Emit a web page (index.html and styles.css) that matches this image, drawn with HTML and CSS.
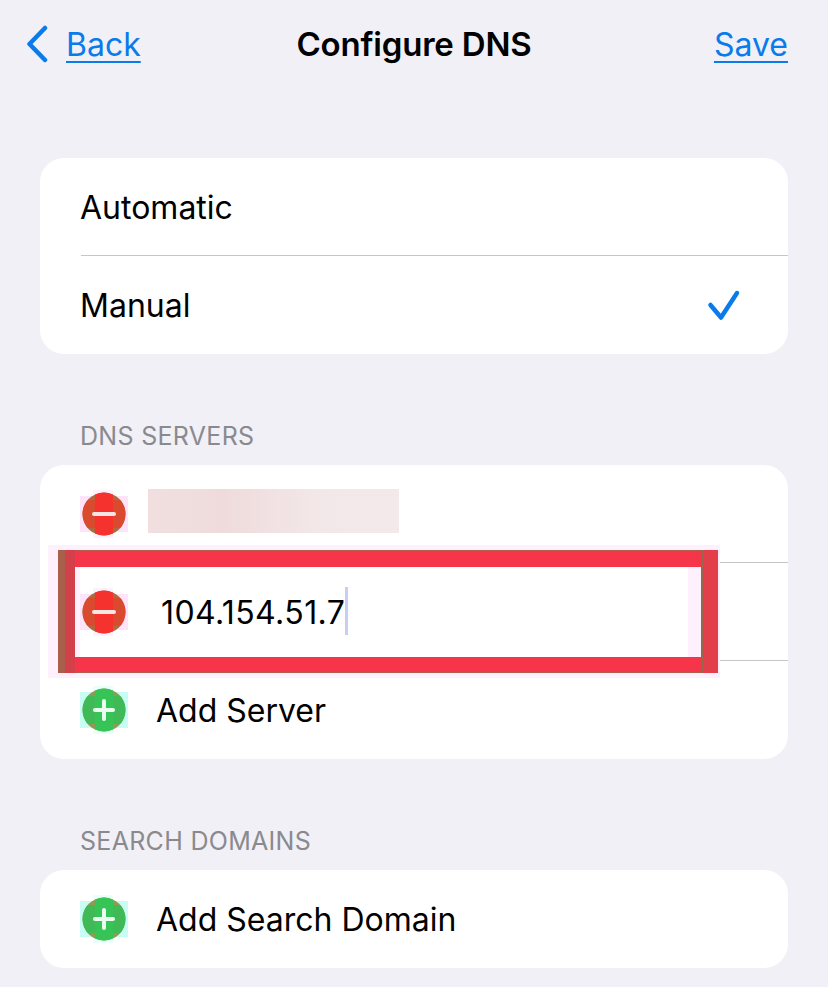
FILE: index.html
```html
<!DOCTYPE html>
<html>
    <head>
        <title>Configure DNS</title>
        <link rel="stylesheet" href="styles.css">
    </head>
    <body>
      <svg class="icon-defs" width="0" height="0">
        <defs>
          <clipPath id="round-clip"><circle cx="24" cy="24" r="21.500"/></clipPath>
          <symbol id="minus-icon" viewBox="0 0 48 48">
            <rect x="0" y="6" width="48" height="36" fill="#fee4fa"/>
            <rect x="13" y="0" width="20" height="48" fill="#fff0fd"/>
            <g clip-path="url(#round-clip)">
              <rect width="48" height="48" fill="#ad6a3e"/>
              <rect x="0" y="10" width="48" height="28" fill="#d94a2f"/>
              <rect x="15" y="0" width="18" height="48" fill="#f6322e"/>
            </g>
            <rect x="12" y="22" width="24" height="4" rx="2" fill="#f7e6e2"/>
          </symbol>
          <symbol id="plus-icon" viewBox="0 0 48 48">
            <rect x="0" y="6" width="48" height="36" fill="#c8fdf3"/>
            <rect x="13" y="0" width="20" height="48" fill="#e8fffa"/>
            <g clip-path="url(#round-clip)">
              <rect width="48" height="48" fill="#8f9a52"/>
              <rect x="0" y="10" width="48" height="28" fill="#3fba57"/>
              <rect x="15" y="0" width="18" height="48" fill="#36c457"/>
            </g>
            <rect x="22" y="13" width="4" height="22" rx="2" fill="#ecfbef"/>
            <rect x="13" y="22" width="22" height="4" rx="2" fill="#ecfbef"/>
          </symbol>
        </defs>
      </svg>

      <div class="nav-bar">
        <a class="nav-back" href="#">
          <svg class="back-chevron" width="24" height="38" viewBox="0 0 24 38">
            <path d="M20 3 L4.500 19 L20 35" fill="none" stroke="#0a7bea" stroke-width="4.500" stroke-linecap="round" stroke-linejoin="round"/>
          </svg>
          <span class="nav-link">Back</span>
        </a>
        <h1 class="nav-title">Configure DNS</h1>
        <a class="nav-link nav-save" href="#">Save</a>
      </div>

      <div class="card first-card">
        <div class="row">Automatic</div>
        <div class="row row-line">
          <span>Manual</span>
          <svg class="check" width="34" height="34" viewBox="0 0 34 34">
            <path d="M3.500 17 L14 29.500 L30 5" fill="none" stroke="#0a7bea" stroke-width="4.500" stroke-linecap="round" stroke-linejoin="round"/>
          </svg>
        </div>
      </div>

      <h2 class="section-title">DNS SERVERS</h2>
      <div class="card">
        <div class="row icon-row">
          <svg class="round-icon" width="48" height="48"><use href="#minus-icon"/></svg>
          <div class="blurred-ip"></div>
        </div>
        <div class="row icon-row row-line">
          <svg class="round-icon" width="48" height="48"><use href="#minus-icon"/></svg>
          <span class="ip-text">104.154.51.7</span><span class="caret"></span>
          <div class="highlight-box"></div>
        </div>
        <div class="row icon-row row-line">
          <svg class="round-icon" width="48" height="48"><use href="#plus-icon"/></svg>
          <span>Add Server</span>
        </div>
      </div>

      <h2 class="section-title">SEARCH DOMAINS</h2>
      <div class="card">
        <div class="row icon-row">
          <svg class="round-icon" width="48" height="48"><use href="#plus-icon"/></svg>
          <span>Add Search Domain</span>
        </div>
      </div>
    </body>
</html>
```

FILE: styles.css
```css
html, body {
    margin: 0px;
    background-color: #f0f0f6;
}
body {
    height: 987px;
    overflow: hidden;
    font-family: "Inter", "Liberation Sans", sans-serif;
    font-size: 32px;
    color: #000000;
}
.icon-defs {
    display: block;
    height: 0px;
}
.nav-bar {
    height: 88px;
    padding: 0px 40px;
    display: grid;
    grid-template-columns: 1fr auto 1fr;
    align-items: center;
}
.nav-back {
    display: flex;
    align-items: center;
    gap: 17px;
    margin-left: -15px;
    text-decoration: none;
}
.nav-link {
    color: #0a7bea;
    text-decoration: underline;
    text-decoration-thickness: 2px;
    text-underline-offset: 5px;
}
.nav-save {
    justify-self: end;
}
.nav-title {
    margin: 0px;
    font-size: 33px;
    font-weight: 600;
    letter-spacing: -0.2px;
}
.back-chevron {
    display: block;
}
.card {
    margin: 0px 40px;
    background-color: #ffffff;
    border-radius: 24px;
    overflow: hidden;
}
.first-card {
    margin-top: 70px;
}
.row {
    height: 98px;
    padding: 0px 47px 0px 40px;
    display: flex;
    align-items: center;
    justify-content: space-between;
    position: relative;
}
.row-line::before {
    content: "";
    position: absolute;
    left: 41px;
    right: 0px;
    top: -1px;
    height: 1px;
    background-color: #c6c6c8;
}
.icon-row {
    justify-content: flex-start;
}
.round-icon {
    display: block;
    flex: none;
    margin-right: 28px;
}
.blurred-ip {
    width: 251px;
    height: 44px;
    margin-left: -8px;
    margin-top: -6px;
    background: linear-gradient(to right, #f1dfe0, #efdbdc 30%, #f3e8e9 70%, #f4e9ea);
}
.ip-text {
    margin-left: 5px;
    letter-spacing: 0.4px;
}
.caret {
    width: 3px;
    height: 48px;
    margin-bottom: 2px;
    background-color: #c9cdf2;
}
.highlight-box {
    position: absolute;
    z-index: 1;
    left: 18px;
    top: -12px;
    width: 626px;
    height: 90px;
    border-style: solid;
    border-color: #f6344a;
    border-width: 16px 17px 15px 17px;
    background:
        linear-gradient(#fff0fd, #fff0fd) left / 5px 100% no-repeat,
        linear-gradient(#fff0fd, #fff0fd) right / 13px 100% no-repeat;
    background-clip: padding-box;
    box-shadow: 0px -1px 0px 0px #b0604a, 0px 1px 0px 0px #b0604a, -4px 0px 0px 6px #fff0fd;
}
.highlight-box::before, .highlight-box::after {
    content: "";
    position: absolute;
    top: -17px;
    bottom: -16px;
    width: 17px;
}
.highlight-box::before {
    left: -17px;
    background: linear-gradient(to right, #a8604a 7px, #d2414a 7px);
}
.highlight-box::after {
    right: -17px;
    background: linear-gradient(to right, #96684a 2px, #e23f4a 2px);
}
.section-title {
    margin: 0px 0px 0px 80px;
    height: 111px;
    box-sizing: border-box;
    padding-top: 68px;
    font-size: 25px;
    line-height: 29px;
    font-weight: 400;
    letter-spacing: 0.3px;
    color: #8a8a8e;
}
```
